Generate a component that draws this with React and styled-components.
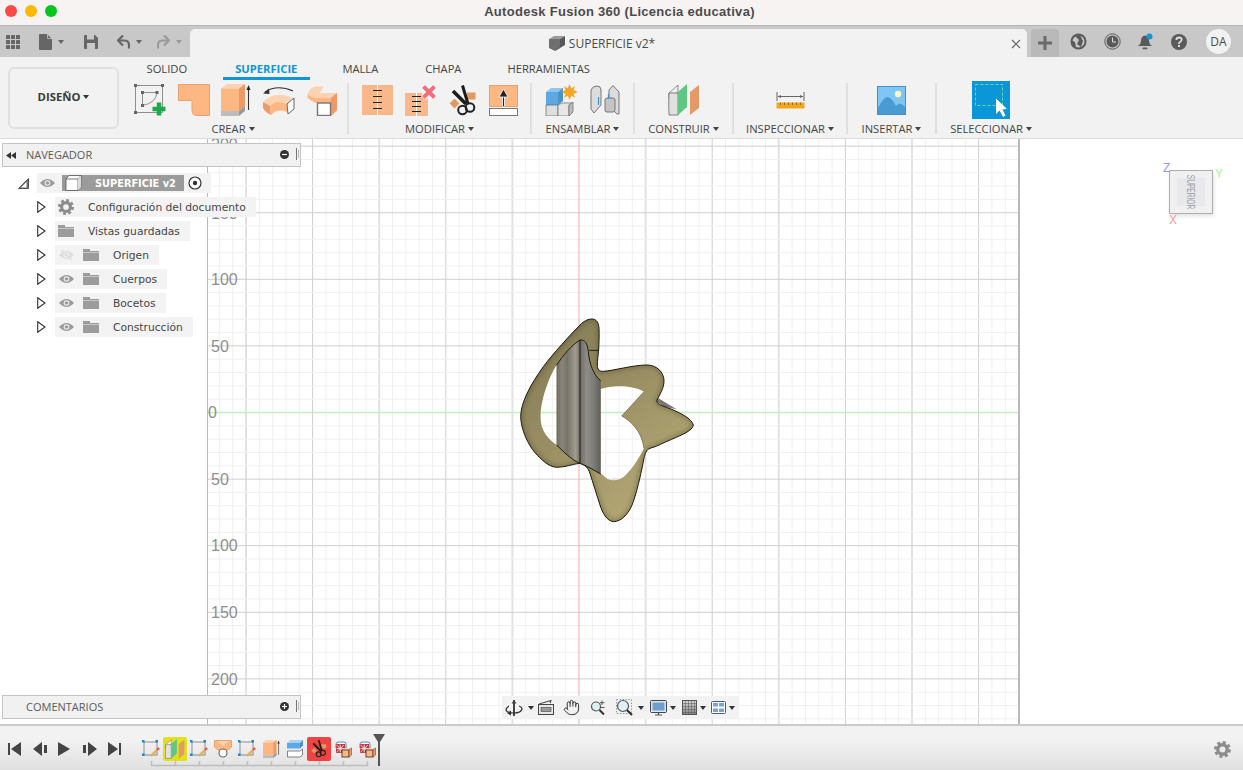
import React from "react";
import styled, { createGlobalStyle } from "styled-components";
import { Hand } from "lucide-react";

const GlobalStyle = createGlobalStyle`
  html, body { margin: 0; padding: 0; background: #fff; }
  body { font-family: "Open Sans", "Liberation Sans", sans-serif; overflow: hidden; }
`;

const Page = styled.div`
  width: 1243px;
  height: 770px;
  display: flex;
  flex-direction: column;
  overflow: hidden;
`;

/* title bar */
const TitleBar = styled.div`
  height: 25px;
  flex: none;
  background: #f6f3f2;
  border-bottom: 1px solid #b4b4b4;
  display: flex;
  align-items: center;
  justify-content: center;
  position: relative;
`;
const Lights = styled.div`
  position: absolute;
  left: 5px;
  top: 5px;
  display: flex;
  gap: 8px;
`;
const Light = styled.span`
  width: 12px;
  height: 12px;
  border-radius: 50%;
  background: ${(p) => p.$color};
`;
const Title = styled.div`
  font: bold 13px "Liberation Sans", sans-serif;
  letter-spacing: 0.3px;
  color: #4b4b4b;
  margin: -3px 4px 0 0;
`;

/* document tab bar */
const TabBar = styled.div`
  height: 31px;
  flex: none;
  background: #c8c8c8;
  display: flex;
  align-items: flex-end;
`;
const QuickTools = styled.div`
  width: 190px;
  height: 31px;
  display: flex;
  align-items: center;
  padding-left: 6px;
  box-sizing: border-box;
`;
const QuickItem = styled.span`
  display: flex;
  align-items: center;
  margin-left: ${(p) => p.$left}px;
`;
const DocTab = styled.div`
  width: 837px;
  height: 28px;
  background: #f2f2f2;
  border-radius: 5px 5px 0 0;
  display: flex;
  align-items: center;
  justify-content: center;
  gap: 4px;
  padding-right: 13px;
  box-sizing: border-box;
  position: relative;
  font-size: 12px;
  color: #4a4a4a;
`;
const CloseMark = styled.svg`
  position: absolute;
  right: 6px;
  top: 10px;
`;
const PlusTab = styled.div`
  width: 28px;
  height: 28px;
  margin-left: 4px;
  background: #b9b9b9;
  border-radius: 4px 4px 0 0;
  display: flex;
  align-items: center;
  justify-content: center;
`;
const StatusIcons = styled.div`
  height: 31px;
  display: flex;
  align-items: center;
  gap: 17px;
  padding-left: 11px;
`;
const Avatar = styled.div`
  width: 25px;
  height: 25px;
  border-radius: 50%;
  background: #f2f2f2;
  color: #4a4a4a;
  font-size: 12px;
  display: flex;
  align-items: center;
  justify-content: center;
  margin-left: 2px;
`;
const Caret = styled.span`
  display: inline-block;
  width: 0;
  height: 0;
  border-left: 3px solid transparent;
  border-right: 3px solid transparent;
  border-top: 4px solid ${(p) => p.$color || "#444"};
  margin-left: ${(p) => p.$gap ?? 3}px;
  vertical-align: 2px;
`;

/* ribbon */
const Ribbon = styled.div`
  height: 82px;
  flex: none;
  box-sizing: border-box;
  background: #f2f2f2;
  border-bottom: 1px solid #dcdcdc;
  display: flex;
`;
const DesignButton = styled.div`
  width: 111px;
  height: 62px;
  margin: 10px 0 0 8px;
  padding-bottom: 3px;
  box-sizing: border-box;
  border: 2px solid #e0e0e0;
  border-radius: 6px;
  display: flex;
  align-items: center;
  justify-content: center;
  font-size: 11.3px;
  font-weight: 700;
  color: #3a3a3a;
`;
const RibbonBody = styled.div`
  display: flex;
  flex-direction: column;
`;
const RibbonTabs = styled.div`
  height: 26px;
  padding-left: 15px;
  display: flex;
  align-items: flex-start;
  gap: 20px;
`;
const RibbonTab = styled.div`
  height: 17px;
  margin-top: 3px;
  margin-right: ${(p) => p.$after || 0}px;
  padding: 0 12.5px;
  font-size: 11.2px;
  line-height: 17px;
  font-weight: ${(p) => (p.$active ? 700 : 400)};
  color: ${(p) => (p.$active ? "#0f96d8" : "#444")};
  border-bottom: 3px solid ${(p) => (p.$active ? "#0f96d8" : "transparent")};
`;
const Groups = styled.div`
  display: flex;
`;
const Group = styled.div`
  width: ${(p) => p.$width}px;
  height: 51px;
  box-sizing: border-box;
  border-left: ${(p) => (p.$first ? "none" : "2px solid #e0e0e0")};
  display: flex;
  flex-direction: column;
  align-items: center;
`;
const GroupIcons = styled.div`
  height: 34px;
  flex: none;
  display: flex;
  align-items: center;
  gap: ${(p) => p.$gap || 11}px;
  margin-left: ${(p) => p.$shift || 0}px;
`;
const GroupLabel = styled.div`
  margin-top: 4px;
  flex: none;
  font-size: 11.2px;
  line-height: 15px;
  color: #444;
  white-space: nowrap;
`;

/* viewport */
const Viewport = styled.div`
  flex: 1;
  position: relative;
  display: flex;
  padding-left: 207px;
  background: #fff;
`;
const Canvas = styled.div`
  width: 813px;
  height: 585px;
  position: relative;
`;
const GridArt = styled.svg`
  display: block;
`;
const Body3D = styled.svg`
  position: absolute;
  left: 293px;
  top: 171px;
`;
const SidePanel = styled.div`
  position: absolute;
  left: 2px;
  top: 4px;
  bottom: 5px;
  width: 299px;
  display: flex;
  flex-direction: column;
  justify-content: space-between;
`;
const PanelHeader = styled.div`
  height: 24px;
  box-sizing: border-box;
  background: #f1f1f1;
  border: 1px solid #c4c4c4;
  display: flex;
  align-items: center;
  font-size: 11px;
  color: #5a5a5a;
  padding: 0 0 2px 23px;
  position: relative;
`;
const PanelTools = styled.div`
  margin-left: auto;
  padding-right: 1px;
  display: flex;
  align-items: center;
  gap: 7px;
`;
const Rewind = styled.svg`
  position: absolute;
  left: 3px;
  top: 8px;
`;
const Tree = styled.div`
  margin-top: 4px;
  font-family: "DejaVu Sans", sans-serif;
  font-size: 10.7px;
  color: #454545;
`;
const TreeRow = styled.div`
  height: 24px;
  display: flex;
  align-items: center;
  padding-left: ${(p) => p.$indent}px;
`;
const Twist = styled.span`
  width: ${(p) => p.$width}px;
  flex: none;
  display: flex;
`;
const RowBody = styled.div`
  height: 20px;
  display: flex;
  align-items: center;
  background: #f3f3f3;
  padding-right: ${(p) => p.$right ?? 10}px;
  white-space: nowrap;
`;
const Slot = styled.span`
  width: ${(p) => p.$width}px;
  margin-left: ${(p) => p.$left || 0}px;
  flex: none;
  display: flex;
  justify-content: center;
  align-items: center;
`;
const RowText = styled.span`
  margin-left: 11px;
`;
const RootBlock = styled.div`
  width: 122px;
  height: 16px;
  margin-left: 4px;
  background: #9b9b9b;
  display: flex;
  align-items: center;
  color: #fff;
  font-weight: 700;
  font-size: 9.8px;
`;
const RootCube = styled.span`
  width: 33px;
  display: flex;
  padding-left: 3px;
  box-sizing: border-box;
`;
const NavBar = styled.div`
  position: absolute;
  left: 502px;
  top: 557px;
  width: 237px;
  height: 23px;
  background: #f2f2f2;
  display: flex;
  align-items: center;
  padding-left: 3px;
  box-sizing: border-box;
`;
const NavItem = styled.span`
  display: flex;
  align-items: center;
  margin-right: ${(p) => p.$space ?? 7}px;
`;
const ViewCube = styled.div`
  position: absolute;
  left: 1169px;
  top: 31px;
  width: 44px;
  height: 44px;
  box-sizing: border-box;
  background: #f0f0f0;
  border: 1px solid #aeaeae;
  box-shadow: 1px 2px 4px rgba(0, 0, 0, 0.12);
  display: flex;
  align-items: center;
  justify-content: center;
`;
const CubeFace = styled.div`
  width: 28px;
  height: 28px;
  background: #e8e9ec;
  display: flex;
  align-items: center;
  justify-content: center;
`;
const CubeText = styled.span`
  flex: none;
  transform: rotate(90deg) scaleX(0.63);
  font: 10.5px "Liberation Sans", sans-serif;
  color: #9c9ca4;
`;
const Axis = styled.span`
  position: absolute;
  left: ${(p) => p.$x}px;
  top: ${(p) => p.$y}px;
  font: 12px "Liberation Sans", sans-serif;
  color: ${(p) => p.$color};
`;

/* timeline */
const Timeline = styled.div`
  height: 46px;
  flex: none;
  box-sizing: border-box;
  border-top: 2px solid #cacaca;
  background: linear-gradient(#f2f2f2 30%, #e0e0e0);
  display: flex;
  align-items: center;
  position: relative;
  padding: 2px 12px 0 8px;
`;
const Playback = styled.div`
  width: 131px;
  flex: none;
  display: flex;
  align-items: center;
  gap: 11.5px;
`;
const Track = styled.div`
  position: relative;
  display: flex;
`;
const Step = styled.div`
  width: 24px;
  height: 24px;
  border-radius: 2px;
  background: ${(p) => p.$bg || "transparent"};
  display: flex;
  align-items: center;
  justify-content: center;
`;
const Bracket = styled.svg`
  position: absolute;
  left: 0;
  top: 23px;
`;
const Marker = styled.svg`
  position: absolute;
  left: 234px;
  top: -3px;
`;
const TimelineGear = styled.span`
  margin-left: auto;
  display: flex;
`;

/* drawings */
const Art = ({ w, h, vb, size, children }) => (
  <svg width={size ? size : w} height={size ? (size * h) / w : h} viewBox={vb || `0 0 ${w} ${h}`}>
    {children}
  </svg>
);

const OR = "#fdb782";
const ORE = "#e8a26f";
const ORD = "#ee9a68";

const SketchIcon = () => (
  <Art w={33} h={32}>
    <rect x="1.5" y="1.5" width="27" height="27" fill="none" stroke="#777" strokeWidth="0.8" />
    {[[0, 0], [27, 0], [0, 27]].map(([x, y]) => (
      <rect key={x + "-" + y} x={x} y={y} width="3" height="3" fill="#666" />
    ))}
    <path d="M8.5 8.5H23Q22 19 8.5 21.5Z" fill="none" stroke="#777" strokeWidth="0.8" />
    <rect x="7" y="7" width="3" height="3" fill="#666" />
    <rect x="21.5" y="7" width="3" height="3" fill="#666" />
    <rect x="7" y="20" width="3" height="3" fill="#666" />
    <path d="M25 18.500V31.500M18.500 25H31.500" stroke="#1fa84a" strokeWidth="4.500" />
  </Art>
);
const PatchIcon = () => (
  <Art w={32} h={32}>
    <path d="M.5.5H31.500V31.500H19Q14 31.500 14 26V16.500H.5Z" fill={OR} stroke={ORE} />
  </Art>
);
const ExtrudeIcon = ({ size }) => (
  <Art w={30} h={32} size={size}>
    <path d="M0 4.500L6 0H24L18 4.500Z" fill="#fcd2b0" />
    <rect y="4.500" width="18" height="22.500" fill={OR} />
    <path d="M18 4.500L24 0V22L18 27Z" fill={ORD} />
    <path d="M0 27H18V32H0Z" fill="#bcbcbc" />
    <path d="M18 27L24 22V27L18 32Z" fill="#9a9a9a" />
    <path d="M27.500 26V4" stroke="#333" strokeWidth="1.100" />
    <path d="M27.500 1L25.500 6H29.500Z" fill="#222" />
  </Art>
);
const SweepIcon = () => (
  <Art w={34} h={30}>
    <path d="M3 7Q15 -1 31 6" fill="none" stroke="#333" strokeWidth="1.100" />
    <path d="M1 8.500L7 3.500L7.500 9Z" fill="#333" />
    <path d="M1 17Q13 5 30 13L25 19Q14 14 8 21Z" fill="#fcd2b0" />
    <path d="M1 17L8 21L9 30Q3 27 1 23Z" fill={ORD} />
    <path d="M8 21Q14 14 25 19V27Q16 23 9 30Z" fill={OR} />
    <path d="M25 19L32 13V24L26 29Z" fill="#fff" stroke="#555" strokeWidth="0.9" />
  </Art>
);
const ThickenIcon = ({ size }) => (
  <Art w={31} h={31} size={size}>
    <path d="M.5 9V13Q4 16 9 18H24V31L30 25V8H22L18 12H8Z" fill={OR} />
    <path d="M.5 9Q3 2 9 1.500H17L12.500 8H30L24 13H8Q3 12 .5 9Z" fill="#fcd2b0" />
    <path d="M24 13L30 8V25L24 31Z" fill={ORD} />
    <rect x="10.500" y="18" width="13" height="12.500" fill="#fff" stroke="#777" strokeWidth="1.400" />
  </Art>
);
const Stitch = ({ w, h, ys, tx }) => (
  <g>
    <rect width={w} height={h} fill="#f7b98c" />
    <rect x={w / 2 - 0.5} width="1" height={h} fill="#fff" />
    {ys.map((y) => (
      <rect key={y} x={w / 2 - tx} y={y} width={tx * 2} height="1" fill="#222" />
    ))}
  </g>
);
const StitchIcon = () => (
  <Art w={31} h={30}>
    <Stitch w={31} h={30} ys={[5, 11, 17, 23]} tx={4.500} />
  </Art>
);
const UnstitchIcon = () => (
  <Art w={32} h={32}>
    <g transform="translate(0 9)">
      <Stitch w={23} h={23} ys={[3, 8, 13, 18]} tx={4.500} />
    </g>
    <path d="M18.500 2.500L29.500 13.500M29.500 2.500L18.500 13.500" stroke="#fff" strokeWidth="6.500" />
    <path d="M18.500 2.500L29.500 13.500M29.500 2.500L18.500 13.500" stroke="#f2707c" strokeWidth="4" />
  </Art>
);
const ScissorsIcon = ({ size }) => (
  <Art w={28} h={31} size={size}>
    <rect x="18" y="7.500" width="8.500" height="7" fill="#e09a62" />
    <rect x="2" y="15" width="7" height="7" fill="#e09a62" transform="rotate(45 5.500 18.500)" />
    <path d="M13.500 .5L19 19" stroke="#1c1c1c" strokeWidth="3" />
    <path d="M4 6L17 19" stroke="#1c1c1c" strokeWidth="3.500" />
    <circle cx="13.500" cy="25" r="4.300" fill="none" stroke="#222" strokeWidth="2" />
    <circle cx="21" cy="22.500" r="4.300" fill="none" stroke="#222" strokeWidth="2" />
  </Art>
);
const OffsetIcon = () => (
  <Art w={29} h={31}>
    <rect x=".5" y=".5" width="28" height="21" fill={OR} stroke={ORE} />
    <rect x=".5" y="23.500" width="28" height="7" fill="#fff" stroke="#777" />
    <path d="M14.500 21V9" stroke="#fff" strokeWidth="3" />
    <path d="M14.500 21V10" stroke="#222" strokeWidth="1.200" />
    <path d="M14.500 4L10 12H19Z" fill="#222" stroke="#fff" strokeWidth="0.8" />
  </Art>
);
const JointIcon = () => (
  <Art w={33} h={32}>
    <path d="M1 8L6 4H18L13 8Z" fill="#8fc6ef" />
    <rect x="1" y="8" width="12" height="13" fill="#5ba8e2" />
    <path d="M13 8L18 4V17L13 21Z" fill="#4a92cc" />
    <path d="M1 21H13V32H1Z" fill="#dedede" stroke="#666" strokeWidth="0.7" />
    <path d="M13 21L17 19H28L24 21V32H13Z" fill="#e6e6e6" stroke="#666" strokeWidth="0.7" />
    <path d="M24 21L28 18V28L24 32Z" fill="#bdbdbd" stroke="#666" strokeWidth="0.7" />
    <path d="M24.500 0L26.300 4.500L30 2L28.500 6L33 8L28.500 10L30 14L26.300 11.500L24.500 16L22.700 11.500L19 14L20.500 10L16.500 8L20.500 6L19 2L22.700 4.500Z" fill="#f5a524" />
  </Art>
);
const AsBuiltIcon = () => (
  <Art w={30} h={30}>
    <path d="M1 5Q3 .5 7 1Q11 1 11 5V20L4 28L1 24Z" fill="#dcdcdc" stroke="#777" />
    <path d="M19 5L23 .5L29 7V29L27 29L19 21Z" fill="#dcdcdc" stroke="#777" />
    <rect x="15" y="13" width="10" height="14" rx="2" fill="#c4c4c4" stroke="#777" />
    <path d="M8.500 12V20M18.500 9V14" stroke="#3b97dc" strokeWidth="1.200" />
  </Art>
);
const PlaneIcon = ({ size }) => (
  <Art w={32} h={32} size={size}>
    <path d="M1 9L10 1V8L1 15Z" fill="#efefef" stroke="#777" strokeWidth="0.8" />
    <path d="M1 9H10V31H1Q0.500 20 1 9Z" fill="#e1e1e1" stroke="#666" strokeWidth="0.8" />
    <path d="M10 8L19 0V23L10 31Z" fill="#5fc684" />
    <path d="M22 8L31 1V24L22 31Z" fill="#e39a66" />
  </Art>
);
const MeasureIcon = () => (
  <Art w={29} h={17}>
    <path d="M1 0V9M28 0V9" stroke="#666" />
    <path d="M2 4.500H27" stroke="#666" />
    <path d="M1.500 4.500L5 3V6ZM27.500 4.500L24 3V6Z" fill="#666" />
    <rect x=".5" y="10.500" width="28" height="6" fill="#f4a51d" />
    {[4, 8, 12, 16, 20, 24].map((x) => (
      <rect key={x} x={x} y="10.500" width="1" height="2.500" fill="#9a6a10" />
    ))}
  </Art>
);
const ImageIcon = () => (
  <Art w={29} h={29}>
    <rect x=".5" y=".5" width="28" height="28" fill="#7fc6f7" stroke="#3f90cb" />
    <circle cx="21" cy="8" r="3.200" fill="#fbf8c6" />
    <path d="M1 22Q7 10 11 11Q15 12 19 20Q23 15 28 21V28H1Z" fill="#4a9ad4" />
  </Art>
);
const SelectIcon = () => (
  <Art w={38} h={38}>
    <rect width="38" height="38" fill="#0a96d8" />
    <rect x="3.500" y="3.500" width="27" height="21" fill="none" stroke="#7fe07f" strokeWidth="0.9" strokeDasharray="3 2" />
    <path d="M24 17.500V33L27.500 29.500L31 36L33.500 34.500L30.500 28.500L35 28Z" fill="#fff" />
  </Art>
);

const Dots = () => (
  <Art w={14} h={14}>
    {[0, 5, 10].flatMap((x) =>
      [0, 5, 10].map((y) => <rect key={x + "_" + y} x={x} y={y} width="4" height="4" rx=".5" fill="#666" />)
    )}
  </Art>
);
const DocIcon = () => (
  <Art w={13} h={16}>
    <path d="M1 0H8L13 5V15Q13 16 12 16H1Q0 16 0 15V1Q0 0 1 0Z" fill="#666" />
    <path d="M8.500 0V4.500H13" fill="none" stroke="#c8c8c8" strokeWidth="0.8" />
  </Art>
);
const SaveIcon = () => (
  <Art w={14} h={14}>
    <path d="M1 0H11L14 3V13Q14 14 13 14H1Q0 14 0 13V1Q0 0 1 0Z" fill="#666" />
    <rect x="3" y="0" width="7" height="4.500" fill="#c8c8c8" />
    <rect x="3" y="8" width="8" height="6" fill="#c8c8c8" />
  </Art>
);
const UndoIcon = ({ flip, color }) => (
  <Art w={13} h={14}>
    <g transform={flip ? "translate(13 0) scale(-1 1)" : undefined}>
      <path d="M2 5.500H7Q12 5.500 12 10V13.500" fill="none" stroke={color} strokeWidth="2.200" />
      <path d="M6 .5L1 5.500L6 10.500" fill="none" stroke={color} strokeWidth="2.200" />
    </g>
  </Art>
);
const GlobeIcon = () => (
  <Art w={17} h={17}>
    <circle cx="8.500" cy="8.500" r="7" fill="none" stroke="#5a5a5a" strokeWidth="2" />
    <path d="M5 3L9 7L7 11L11 14L13 8L10 2Z" fill="#5a5a5a" />
    <path d="M1 7L5 9L6 14L2 12Z" fill="#5a5a5a" />
  </Art>
);
const ClockIcon = () => (
  <Art w={17} h={17}>
    <circle cx="8.500" cy="8.500" r="7.700" fill="none" stroke="#5a5a5a" />
    <circle cx="8.500" cy="8.500" r="6" fill="#5a5a5a" />
    <path d="M8.500 4.500V9H12" fill="none" stroke="#ddd" strokeWidth="1" />
  </Art>
);
const BellIcon = () => (
  <Art w={16} h={17}>
    <path d="M7 2.500Q11 3 11 8Q11 11 14 13H0Q3 11 3 8Q3 3 7 2.500Z" fill="#5a5a5a" />
    <rect x="4.500" y="14.500" width="5" height="1.800" rx=".9" fill="#5a5a5a" />
    <circle cx="11.500" cy="3.500" r="3" fill="#0f96d8" />
  </Art>
);
const HelpIcon = () => (
  <Art w={16} h={16}>
    <circle cx="8" cy="8" r="8" fill="#5a5a5a" />
    <path d="M5.300 6Q5.500 3.500 8 3.500Q10.700 3.500 10.700 5.800Q10.700 7 9 8Q8 8.600 8 10" fill="none" stroke="#ddd" strokeWidth="1.800" />
    <rect x="7" y="11" width="2" height="2" fill="#ddd" />
  </Art>
);
const TabCube = () => (
  <Art w={16} h={15}>
    <path d="M0 3L5 0H16L11 3Z" fill="#9b9b9b" />
    <path d="M0 3H11V12L6 15L0 12Z" fill="#6f6f6f" />
    <path d="M11 3L16 0V9L6 15L11 11Z" fill="#585858" />
  </Art>
);
const Gear = ({ s = 16, color = "#8c8c8c" }) => (
  <Art w={18} h={18} size={s}>
    <circle cx="9" cy="9" r="5" fill="none" stroke={color} strokeWidth="3.600" />
    <circle cx="9" cy="9" r="7.500" fill="none" stroke={color} strokeWidth="3" strokeDasharray="3.200 2.690" />
  </Art>
);
const Eye = ({ off }) => (
  <Art w={15} h={10}>
    <path d="M0 5Q7.500 -3 15 5Q7.500 13 0 5Z" fill={off ? "#dedede" : "#9c9c9c"} />
    <circle cx="7.500" cy="5" r="2.800" fill="#f3f3f3" />
    <circle cx="7.500" cy="5" r="1.800" fill={off ? "#dedede" : "#9c9c9c"} />
    {off && <path d="M2 0L13 10" stroke="#dedede" strokeWidth="1.200" />}
  </Art>
);
const Folder = () => (
  <Art w={16} h={12}>
    <path d="M0 0H7V2H16V3H0Z" fill="#9c9c9c" />
    <rect y="3.500" width="16" height="8.500" fill="#9c9c9c" />
  </Art>
);
const Twisty = () => (
  <Art w={9} h={12}>
    <path d="M.7 .7L8 6L.7 11.300Z" fill="#fff" stroke="#333" strokeWidth="1.100" />
  </Art>
);
const RootTwisty = () => (
  <Art w={11} h={11}>
    <path d="M10.500 .5V10.500H.5Z" fill="#777" stroke="#333" strokeWidth="0.8" />
    <path d="M8.500 4V9.500H3Z" fill="#fff" />
  </Art>
);
const DocCube = () => (
  <Art w={17} h={16}>
    <path d="M1 4L4 .5H16V12L13 15.500H1Z" fill="#fff" stroke="#555" strokeWidth="0.8" />
    <path d="M1 4H13V15.500M13 4L16 .5" fill="none" stroke="#555" strokeWidth="0.8" />
    <path d="M13 4L16 .5V12L13 15.500Z" fill="#ddd" />
  </Art>
);
const Target = () => (
  <Art w={14} h={14}>
    <circle cx="7" cy="7" r="6" fill="#fff" stroke="#333" strokeWidth="1.200" />
    <circle cx="7" cy="7" r="2.200" fill="#333" />
  </Art>
);
const PanelDot = ({ plus }) => (
  <Art w={9} h={9}>
    <circle cx="4.500" cy="4.500" r="4.500" fill="#333" />
    <path d={plus ? "M2 4.500H7M4.500 2V7" : "M2 4.500H7"} stroke="#fff" strokeWidth="1.200" />
  </Art>
);
const PanelGrip = () => (
  <Art w={3} h={12}>
    <path d="M.5 0V12" stroke="#777" />
    <path d="M2.500 2V10" stroke="#bbb" />
  </Art>
);

const OrbitIcon = () => (
  <Art w={18} h={18}>
    <path d="M9 1V17" stroke="#444" strokeWidth="2" />
    <path d="M9 1L6.500 4.500H11.500Z" fill="#444" />
    <path d="M4 7Q1 9 1 11Q2 14 9 14Q16 14 17 10Q17 8 14 7" fill="none" stroke="#333" strokeWidth="1.200" />
    <path d="M6 11.500L2 14L6 16.500Z" fill="#333" />
  </Art>
);
const LookIcon = () => (
  <Art w={16} h={15}>
    <rect x=".5" y="4.500" width="15" height="10" fill="#e8e8e8" stroke="#444" />
    <rect x="3" y="7.500" width="10" height="4" fill="#9a9a9a" stroke="#444" strokeWidth="0.6" />
    <path d="M1 4L13 .5L12 3" fill="none" stroke="#555" strokeWidth="1.200" />
  </Art>
);
const ZoomIcon = () => (
  <Art w={16} h={15}>
    <circle cx="6" cy="6.500" r="4.500" fill="#dff0f7" stroke="#555" strokeWidth="1.200" />
    <path d="M9.500 10L14 14.500" stroke="#333" strokeWidth="2" />
    <path d="M12 .5V5M10 2.700H14.500M10 7.500H14.500" stroke="#555" />
  </Art>
);
const FitIcon = () => (
  <Art w={18} h={17}>
    <rect x=".5" y=".5" width="15" height="14" fill="none" stroke="#999" strokeDasharray="1.500 1.500" />
    <circle cx="7" cy="7" r="5.500" fill="#dff0f7" stroke="#555" strokeWidth="1.200" />
    <path d="M11 11L16 16" stroke="#333" strokeWidth="2.200" />
  </Art>
);
const DisplayIcon = () => (
  <Art w={17} h={16}>
    <rect x=".5" y=".5" width="16" height="12" rx="1" fill="#dfe6ee" stroke="#444" />
    <rect x="2.500" y="2.500" width="12" height="8" fill="#6f9fd0" />
    <path d="M5 15H12M8.500 13V15" stroke="#555" strokeWidth="1.200" />
  </Art>
);
const GridIcon = () => (
  <Art w={15} h={15}>
    <defs>
      <linearGradient id="gridFade" x1="0" y1="0" x2="0" y2="1">
        <stop offset="0" stopColor="#d8d8d8" />
        <stop offset="1" stopColor="#888" />
      </linearGradient>
    </defs>
    <rect x=".5" y=".5" width="14" height="14" fill="url(#gridFade)" stroke="#555" />
    <path d="M3.500 0V15M6.500 0V15M9.500 0V15M12.500 0V15M0 3.500H15M0 6.500H15M0 9.500H15M0 12.500H15" stroke="#555" strokeWidth="0.5" />
  </Art>
);
const PanesIcon = () => (
  <Art w={15} h={13}>
    <rect x=".5" y=".5" width="14" height="12" rx="1" fill="#fff" stroke="#37618f" />
    <rect x="2" y="2" width="5" height="3.500" fill="#7ba3cf" />
    <rect x="8" y="2" width="5" height="3.500" fill="#7ba3cf" />
    <rect x="2" y="7.500" width="5" height="3.500" fill="#7ba3cf" />
    <rect x="8" y="7.500" width="5" height="3.500" fill="#7ba3cf" />
  </Art>
);

const SketchStep = () => (
  <Art w={18} h={18}>
    <rect x="2" y="2" width="13" height="13" fill="none" stroke="#666" strokeWidth="0.7" />
    {[[0, 0], [13.500, 0], [0, 13.500]].map(([x, y]) => (
      <rect key={x + "/" + y} x={x} y={y} width="2.500" height="2.500" fill="#1c86d8" />
    ))}
    <path d="M9 16L15 10" stroke="#e6b04a" strokeWidth="2.400" />
    <path d="M15 10L17 8" stroke="#e8505a" strokeWidth="2.400" />
  </Art>
);
const LoftStep = () => (
  <Art w={18} h={18}>
    <path d="M.5 .5H17.500V7L9 14L.5 7Z" fill={OR} stroke={ORE} />
    <path d="M3 1L9 6L15 1" fill="#fcd2b0" />
    <circle cx="9" cy="13" r="4" fill="#fff" stroke="#666" strokeWidth="1.100" />
  </Art>
);
const SurfaceStep = () => (
  <Art w={16} h={18}>
    <path d="M0 3L3 0H16L13 3Z" fill="#a9d3f2" />
    <rect y="3" width="13" height="5.500" fill="#5ba8e2" />
    <path d="M13 3L16 0V5.500L13 8.500Z" fill="#4a92cc" />
    <path d="M.5 11H13L15.500 9V15L13 17H.5Z" fill="#fff" stroke="#666" strokeWidth="0.8" />
  </Art>
);
const CombineStep = () => (
  <Art w={17} h={17}>
    <path d="M1 3Q1 1 4 1H9Q11 1 11 3V7H1Z" fill="#fff" stroke="#2a7fc5" strokeWidth="0.9" />
    <rect x="1" y="3" width="9" height="9" fill="#c8343c" />
    <path d="M1.500 4L9 11M9 4L1.500 11M1.500 7.500H9M5.200 3.500V11.500" stroke="#fff" strokeWidth="0.8" />
    <path d="M7 9L9.500 7H16.500L14 9Z" fill="#fcd2b0" />
    <rect x="7" y="9" width="7" height="7" fill={OR} stroke="#4a3a2c" strokeWidth="0.9" />
    <path d="M14 9L16.500 7V14L14 16Z" fill={ORD} stroke="#4a3a2c" strokeWidth="0.5" />
  </Art>
);

const PlayGlyph = ({ d, w = 13 }) => (
  <Art w={w} h={14}>
    <path d={d} fill="#444" />
  </Art>
);

const GROUPS = [
  { label: "CREAR", width: 228, first: true, gap: 11, shift: 5, icons: [SketchIcon, PatchIcon, ExtrudeIcon, SweepIcon, ThickenIcon] },
  { label: "MODIFICAR", width: 183, gap: 12, icons: [StitchIcon, UnstitchIcon, ScissorsIcon, OffsetIcon] },
  { label: "ENSAMBLAR", width: 103, gap: 12, icons: [JointIcon, AsBuiltIcon] },
  { label: "CONSTRUIR", width: 99, icons: [PlaneIcon] },
  { label: "INSPECCIONAR", width: 114, icons: [MeasureIcon] },
  { label: "INSERTAR", width: 89, icons: [ImageIcon] },
  { label: "SELECCIONAR", width: 110, icons: [SelectIcon] },
];

const TREE = [
  { text: "Configuración del documento", icon: "gear" },
  { text: "Vistas guardadas", icon: "folder" },
  { text: "Origen", icon: "folder", eye: "off" },
  { text: "Cuerpos", icon: "folder", eye: "on" },
  { text: "Bocetos", icon: "folder", eye: "on" },
  { text: "Construcción", icon: "folder", eye: "on" },
];

const STEPS = [
  { Icon: SketchStep },
  { Icon: () => <PlaneIcon size={20} />, bg: "#e3e01e" },
  { Icon: SketchStep },
  { Icon: LoftStep },
  { Icon: SketchStep },
  { Icon: () => <ExtrudeIcon size={17} /> },
  { Icon: SurfaceStep },
  { Icon: () => <ScissorsIcon size={16} />, bg: "#f04444" },
  { Icon: CombineStep },
  { Icon: CombineStep },
];

const SCALE = 13.32;
const X0 = 579;
const Y0 = 412.5;

function GridLines() {
  const lines = [];
  for (let k = -28; k <= 33; k++) {
    const x = X0 + k * SCALE;
    if (x < 207 || x > 1019 || k === 0) continue;
    const major = k % 5 === 0;
    const strong = k % 10 === 0;
    lines.push(
      <line
        key={"v" + k}
        x1={x}
        x2={x}
        y1="139"
        y2="724"
        stroke={major ? (strong ? "#cfcfcf" : "#e2e2e2") : "#f0f0f0"}
        strokeWidth={major && !strong ? 2 : 1}
      />
    );
  }
  for (let k = -20; k <= 23; k++) {
    const y = Y0 + k * SCALE;
    if (k === 0) continue;
    const major = k % 5 === 0;
    lines.push(
      <line key={"h" + k} x1="207" x2="1019" y1={y} y2={y} stroke={major ? "#cfcfcf" : "#f0f0f0"} />
    );
  }
  return lines;
}

const GRID_LABELS = [
  { x: 211, y: 150, t: "200" },
  { x: 211, y: 218.500, t: "150" },
  { x: 211, y: 284.500, t: "100" },
  { x: 211, y: 351.500, t: "50" },
  { x: 208, y: 418, t: "0" },
  { x: 211, y: 485, t: "50" },
  { x: 211, y: 551, t: "100" },
  { x: 211, y: 618, t: "150" },
  { x: 211, y: 685, t: "200" },
];

const OUTER =
  "M275 27C290 27 296 38 297 55C298 75 297 100 296 120C294 140 292 150 292 165C292 178 298 185 310 184C340 182 400 165 440 165C470 165 490 185 492 210C493 235 478 255 470 272C472 285 490 288 510 296C540 308 575 325 580 345C578 362 545 375 515 388C490 398 470 410 450 415C438 420 436 430 432 445C425 480 415 530 400 575C388 610 365 635 340 635C320 632 308 610 300 585C290 555 280 520 268 485C262 470 250 462 238 460C220 462 195 472 170 472C145 470 125 450 105 428C85 405 63 360 62 320C62 280 90 225 130 170C160 130 210 75 245 40C255 32 265 27 275 27Z";
const HOLES =
  "M170 165C150 195 125 260 122 310C120 350 130 375 170 405ZM302 237C330 228 390 222 432 245L365 318C395 335 425 365 432 415C420 440 395 480 375 497C360 510 340 515 322 507L302 490Z";
const CYLINDER =
  "M170 165C190 135 215 105 240 90C255 88 262 100 265 125C268 160 280 195 302 212V492C280 480 260 467 240 460C215 450 190 425 170 405Z";

function SurfaceBody() {
  return (
    <Body3D width="210" height="220" viewBox="0 0 630 660">
      <defs>
        <linearGradient id="tan" x1="0.1" y1="0.05" x2="0.7" y2="0.95">
          <stop offset="0" stopColor="#837c55" />
          <stop offset="0.4" stopColor="#968b61" />
          <stop offset="0.7" stopColor="#a59a6b" />
          <stop offset="1" stopColor="#b3a774" />
        </linearGradient>
        <linearGradient id="steel" x1="170" y1="0" x2="302" y2="0" gradientUnits="userSpaceOnUse">
          <stop offset="0" stopColor="#6e6b63" />
          <stop offset="0.12" stopColor="#8a867d" />
          <stop offset="0.24" stopColor="#77736b" />
          <stop offset="0.43" stopColor="#a29c8e" />
          <stop offset="0.53" stopColor="#6f6c64" />
          <stop offset="0.68" stopColor="#8e8c86" />
          <stop offset="0.85" stopColor="#7c7b76" />
          <stop offset="1" stopColor="#5f5e5a" />
        </linearGradient>
        <filter id="soft">
          <feGaussianBlur stdDeviation="6" />
        </filter>
        <clipPath id="skin">
          <path d={OUTER + HOLES} clipRule="evenodd" />
        </clipPath>
      </defs>
      <path d="M470 262L530 298L492 290L470 275Z" fill="#77766f" />
      <path d={OUTER + HOLES} fill="url(#tan)" fillRule="evenodd" />
      <g clipPath="url(#skin)">
        <path d={OUTER} fill="none" stroke="#3a361f" strokeWidth="14" opacity="0.3" filter="url(#soft)" />
      </g>
      <path d={OUTER} fill="none" stroke="#1c1a10" strokeWidth="3" />
      <path d={CYLINDER} fill="url(#steel)" />
      <path d="M170 165C190 135 215 105 240 90C255 88 262 100 265 125C268 160 280 195 302 212" fill="none" stroke="#1c1a10" strokeWidth="3" />
      <path d="M240 90V460M268 121H296M170 405C190 425 215 450 240 460C260 467 280 480 302 492" fill="none" stroke="#1c1a10" strokeWidth="3" />
      <path d="M432 245L365 318C395 335 425 365 432 415" fill="none" stroke="#3e3a25" strokeWidth="1.500" />
    </Body3D>
  );
}

export default function App() {
  return (
    <Page>
      <GlobalStyle />
      <TitleBar>
        <Lights>
          <Light $color="#fd4a46" />
          <Light $color="#fdb802" />
          <Light $color="#05c51e" />
        </Lights>
        <Title>Autodesk Fusion 360 (Licencia educativa)</Title>
      </TitleBar>

      <TabBar>
        <QuickTools>
          <Dots />
          <QuickItem $left={19}>
            <DocIcon />
            <Caret $color="#666" $gap={6} />
          </QuickItem>
          <QuickItem $left={20}>
            <SaveIcon />
          </QuickItem>
          <QuickItem $left={19}>
            <UndoIcon color="#666" />
            <Caret $color="#666" $gap={6} />
          </QuickItem>
          <QuickItem $left={15}>
            <UndoIcon flip color="#9a9a9a" />
            <Caret $color="#9a9a9a" $gap={6} />
          </QuickItem>
        </QuickTools>
        <DocTab>
          <TabCube />
          <span>SUPERFICIE v2*</span>
          <CloseMark width="10" height="10" viewBox="0 0 10 10">
            <path d="M1 1L9 9M9 1L1 9" stroke="#666" strokeWidth="1.200" />
          </CloseMark>
        </DocTab>
        <PlusTab>
          <Art w={14} h={14}>
            <path d="M7 0V14M0 7H14" stroke="#6a6a6a" strokeWidth="3" />
          </Art>
        </PlusTab>
        <StatusIcons>
          <GlobeIcon />
          <ClockIcon />
          <BellIcon />
          <HelpIcon />
          <Avatar>DA</Avatar>
        </StatusIcons>
      </TabBar>

      <Ribbon>
        <DesignButton>
          DISEÑO
          <Caret $color="#333" />
        </DesignButton>
        <RibbonBody>
          <RibbonTabs>
            <RibbonTab $after={3}>SOLIDO</RibbonTab>
            <RibbonTab $active>SUPERFICIE</RibbonTab>
            <RibbonTab $after={2}>MALLA</RibbonTab>
            <RibbonTab $after={1}>CHAPA</RibbonTab>
            <RibbonTab>HERRAMIENTAS</RibbonTab>
          </RibbonTabs>
          <Groups>
            {GROUPS.map((g) => (
              <Group key={g.label} $width={g.width} $first={g.first}>
                <GroupIcons $gap={g.gap} $shift={g.shift}>
                  {g.icons.map((Icon, i) => (
                    <Icon key={i} />
                  ))}
                </GroupIcons>
                <GroupLabel>
                  {g.label}
                  <Caret />
                </GroupLabel>
              </Group>
            ))}
          </Groups>
        </RibbonBody>
      </Ribbon>

      <Viewport>
        <Canvas>
          <GridArt width="813" height="585" viewBox="207 139 813 585">
            <GridLines />
            <line x1={X0} x2={X0} y1="139" y2="724" stroke="#f6a9a9" />
            <line x1="207" x2="1019" y1={Y0} y2={Y0} stroke="#bff2bf" strokeWidth="1.500" />
            <line x1="207" x2="207" y1="139" y2="724" stroke="#b9b9b9" strokeWidth="2" />
            <line x1="1019" x2="1019" y1="139" y2="724" stroke="#b9b9b9" strokeWidth="2" />
            {GRID_LABELS.map((l, i) => (
              <text key={i} x={l.x} y={l.y} fontFamily="Liberation Sans" fontSize="16" fill="#8e8e8e">
                {l.t}
              </text>
            ))}
          </GridArt>
          <SurfaceBody />
        </Canvas>

        <SidePanel>
          <div>
            <PanelHeader>
              <Rewind width="10" height="7" viewBox="0 0 10 7">
                <path d="M5 0V7L0 3.500ZM10 0V7L5 3.500Z" fill="#333" />
              </Rewind>
              NAVEGADOR
              <PanelTools>
                <PanelDot />
                <PanelGrip />
              </PanelTools>
            </PanelHeader>
            <Tree>
              <TreeRow $indent={16}>
                <Twist $width={19}>
                  <RootTwisty />
                </Twist>
                <RowBody $right={7}>
                  <Slot $width={21}>
                    <Eye />
                  </Slot>
                  <RootBlock>
                    <RootCube>
                      <DocCube />
                    </RootCube>
                    SUPERFICIE v2
                  </RootBlock>
                  <Slot $width={18} $left={2}>
                    <Target />
                  </Slot>
                </RowBody>
              </TreeRow>
              {TREE.map((row) => (
                <TreeRow key={row.text} $indent={35}>
                  <Twist $width={18}>
                    <Twisty />
                  </Twist>
                  <RowBody>
                    <Slot $width={22}>
                      {row.eye ? <Eye off={row.eye === "off"} /> : row.icon === "gear" ? <Gear /> : <Folder />}
                    </Slot>
                    {row.eye && (
                      <Slot $width={23} $left={2}>
                        <Folder />
                      </Slot>
                    )}
                    <RowText>{row.text}</RowText>
                  </RowBody>
                </TreeRow>
              ))}
            </Tree>
          </div>
          <PanelHeader>
            COMENTARIOS
            <PanelTools>
              <PanelDot plus />
              <PanelGrip />
            </PanelTools>
          </PanelHeader>
        </SidePanel>

        <NavBar>
          <NavItem $space={4}>
            <OrbitIcon />
            <Caret $color="#333" $gap={5} />
          </NavItem>
          <NavItem $space={9}>
            <LookIcon />
          </NavItem>
          <NavItem $space={10}>
            <Hand size={17} color="#333" strokeWidth={1.4} />
          </NavItem>
          <NavItem $space={10}>
            <ZoomIcon />
          </NavItem>
          <NavItem $space={5.5}>
            <FitIcon />
            <Caret $color="#333" $gap={4} />
          </NavItem>
          <NavItem $space={6}>
            <DisplayIcon />
            <Caret $color="#333" $gap={3} />
          </NavItem>
          <NavItem $space={5}>
            <GridIcon />
            <Caret $color="#333" $gap={3} />
          </NavItem>
          <NavItem $space={0}>
            <PanesIcon />
            <Caret $color="#333" $gap={3} />
          </NavItem>
        </NavBar>

        <ViewCube>
          <CubeFace>
            <CubeText>SUPERIOR</CubeText>
          </CubeFace>
        </ViewCube>
        <Axis $x={1163} $y={22} $color="#9494f8">Z</Axis>
        <Axis $x={1215} $y={28} $color="#9ff59f">Y</Axis>
        <Axis $x={1169} $y={74} $color="#f79a9a">X</Axis>
      </Viewport>

      <Timeline>
        <Playback>
          <PlayGlyph d="M0 1H2V13H0ZM13 0V14L3 7Z" />
          <PlayGlyph w={14} d="M9 0V14L0 7ZM11 3H14V11H11Z" />
          <PlayGlyph d="M0 0L12 7L0 14Z" />
          <PlayGlyph w={14} d="M5 0V14L14 7ZM0 3H3V11H0Z" />
          <PlayGlyph d="M11 1H13V13H11ZM0 0V14L10 7Z" />
        </Playback>
        <Track>
          {STEPS.map(({ Icon, bg }, i) => (
            <Step key={i} $bg={bg}>
              <Icon />
            </Step>
          ))}
          <Bracket width="240" height="8" viewBox="0 0 240 8">
            <path
              d="M12.500 1V5.500H228.500V1M36.500 1V5M60.500 1V5M84.500 1V5M108.500 1V5M132.500 1V5M156.500 1V5M180.500 1V5M204.500 1V5"
              fill="none"
              stroke="#bdbdbd"
              strokeWidth="1.500"
            />
          </Bracket>
          <Marker width="12" height="34" viewBox="0 0 12 34">
            <path d="M0 0H12L7 8V32H5V8Z" fill="#555" />
          </Marker>
        </Track>
        <TimelineGear>
          <Gear s={17} />
        </TimelineGear>
      </Timeline>
    </Page>
  );
}
